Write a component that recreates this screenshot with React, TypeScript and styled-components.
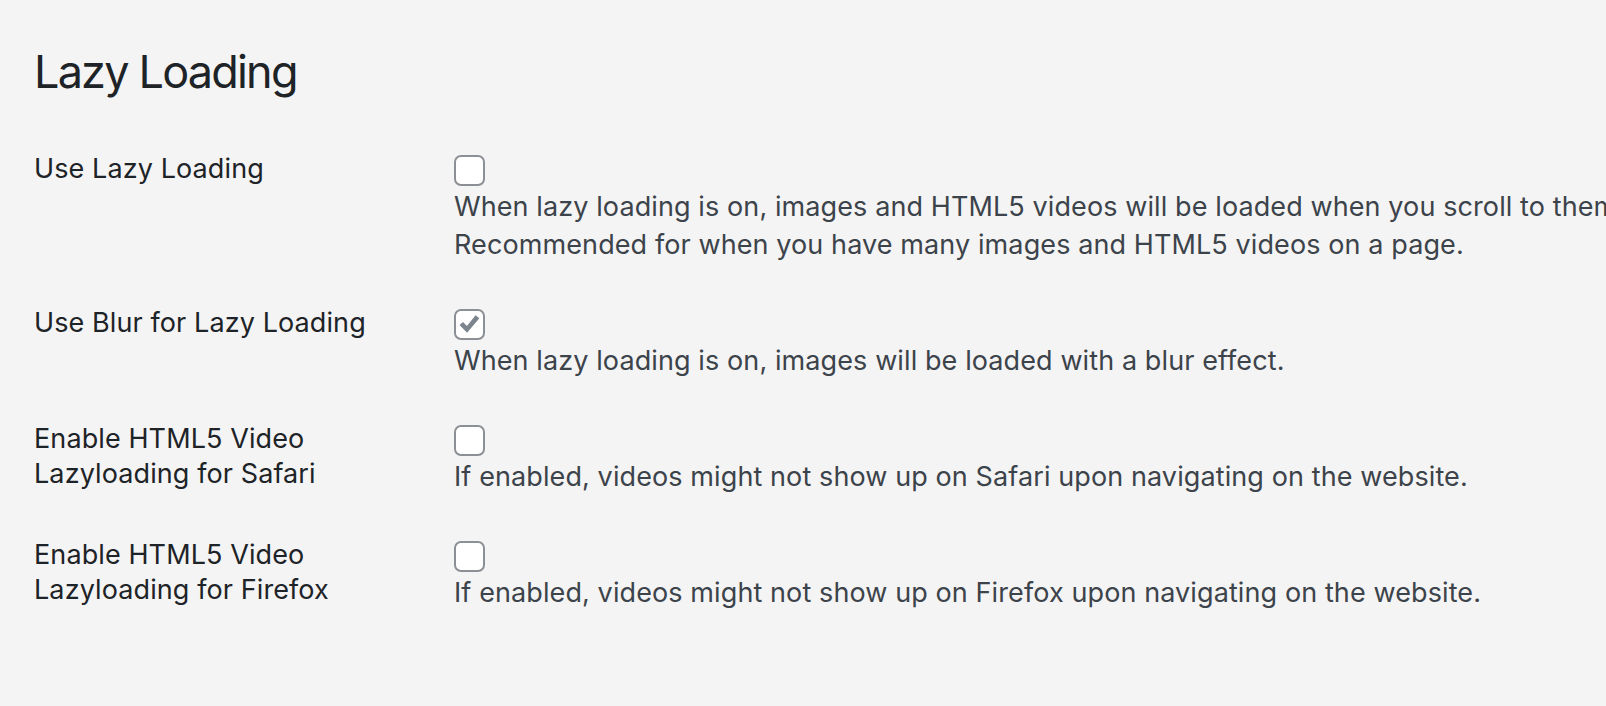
import { createGlobalStyle } from 'styled-components';
import styled from 'styled-components';

const GlobalStyle = createGlobalStyle`
  html, body {
    margin: 0;
    padding: 0;
    background: #f4f4f4;
    overflow: hidden;
  }
  body {
    font-family: Inter, "Noto Sans", sans-serif;
    -webkit-font-smoothing: antialiased;
  }
`;

type TSetting = {
  label: string[];
  checked: boolean;
  description: string[];
};

const settings: TSetting[] = [
  {
    label: ['Use Lazy Loading'],
    checked: false,
    description: [
      'When lazy loading is on, images and HTML5 videos will be loaded when you scroll to them.',
      'Recommended for when you have many images and HTML5 videos on a page.',
    ],
  },
  {
    label: ['Use Blur for Lazy Loading'],
    checked: true,
    description: ['When lazy loading is on, images will be loaded with a blur effect.'],
  },
  {
    label: ['Enable HTML5 Video', 'Lazyloading for Safari'],
    checked: false,
    description: ['If enabled, videos might not show up on Safari upon navigating on the website.'],
  },
  {
    label: ['Enable HTML5 Video', 'Lazyloading for Firefox'],
    checked: false,
    description: ['If enabled, videos might not show up on Firefox upon navigating on the website.'],
  },
];

export default function App() {
  return (
    <Page>
      <GlobalStyle />
      <Title>Lazy Loading</Title>
      <Table>
        {settings.map((setting) => (
          <Row key={setting.label.join(' ')}>
            <Label>
              {setting.label.map((line) => (
                <div key={line}>{line}</div>
              ))}
            </Label>
            <Field>
              <Checkbox $checked={setting.checked}>
                {setting.checked && (
                  <svg width="27" height="27" viewBox="0 0 20 20">
                    <path
                      d="M2.6 10.4 L5.2 8.1 L8.1 11.2 L14.5 3.2 L17.3 5.4 L8.2 16.2 Z"
                      fill="#7c848d"
                    />
                  </svg>
                )}
              </Checkbox>
              <Description>
                {setting.description.map((line) => (
                  <div key={line}>{line}</div>
                ))}
              </Description>
            </Field>
          </Row>
        ))}
      </Table>
    </Page>
  );
}

const Page = styled.div`
  padding: 40px 0 0 34px;
  width: 2200px;
`;

const Title = styled.h2`
  margin: 0;
  font-size: 45px;
  font-weight: 400;
  line-height: 64px;
  letter-spacing: -1.8px;
  color: #1d2327;
`;

const Table = styled.div`
  display: flex;
  flex-direction: column;
  gap: 41px;
  margin-top: 47px;
`;

const Row = styled.div`
  display: grid;
  grid-template-columns: 420px auto;
  align-items: start;
`;

const Label = styled.div`
  font-size: 27px;
  line-height: 35px;
  letter-spacing: 0.1px;
  color: #1d2327;
`;

const Field = styled.div`
  display: flex;
  flex-direction: column;
  align-items: flex-start;
`;

const Checkbox = styled.span<{ $checked: boolean }>`
  box-sizing: border-box;
  margin-top: 4px;
  width: 31px;
  height: 31px;
  border: 2px solid #8c8f94;
  border-radius: 7px;
  background: #ffffff;
  display: flex;
  align-items: center;
  justify-content: center;
  overflow: hidden;
`;

const Description = styled.div`
  margin-top: 2px;
  font-size: 27px;
  line-height: 38px;
  letter-spacing: 0.1px;
  color: #3c434a;
  white-space: nowrap;
`;
